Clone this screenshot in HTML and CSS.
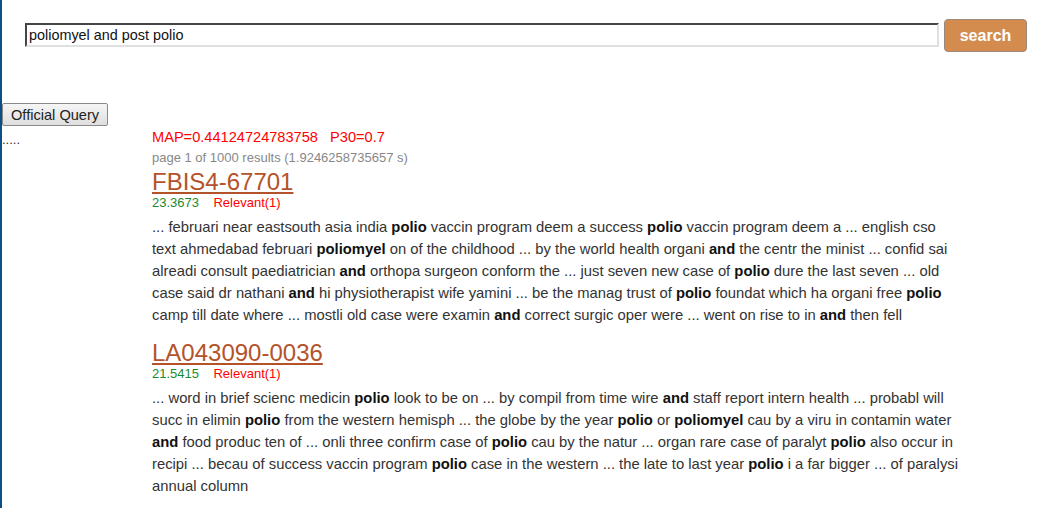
FILE: index.html
```html
<!DOCTYPE html>
<html>
<head>
<meta charset="utf-8">
<title>Search</title>
<link rel="stylesheet" href="styles.css">
</head>
<body>
<div class="page">
  <form class="search-bar">
    <input class="query" type="text" value="poliomyel and post polio">
    <button class="search-btn" type="button">search</button>
  </form>
  <button class="official" type="button">Official Query</button>
  <div class="main">
    <div class="side">.....</div>
    <div class="results">
      <div class="metrics">MAP=0.44124724783758&nbsp;&nbsp;&nbsp;P30=0.7</div>
      <div class="stats">page 1 of 1000 results (1.9246258735657 s)</div>

      <div class="result">
        <a class="title" href="#">FBIS4-67701</a>
        <div class="meta"><span class="score">23.3673</span>&nbsp;&nbsp;&nbsp;&nbsp;<span class="rel">Relevant(1)</span></div>
        <p class="snippet">... februari near eastsouth asia india <b>polio</b> vaccin program deem a success <b>polio</b> vaccin program deem a ... english cso text ahmedabad februari <b>poliomyel</b> on of the childhood ... by the world health organi <b>and</b> the centr the minist ... confid sai alreadi consult paediatrician <b>and</b> orthopa surgeon conform the ... just seven new case of <b>polio</b> dure the last seven ... old case said dr nathani <b>and</b> hi physiotherapist wife yamini ... be the manag trust of <b>polio</b> foundat which ha organi free <b>polio</b> camp till date where ... mostli old case were examin <b>and</b> correct surgic oper were ... went on rise to in <b>and</b> then fell</p>
      </div>

      <div class="result">
        <a class="title" href="#">LA043090-0036</a>
        <div class="meta"><span class="score">21.5415</span>&nbsp;&nbsp;&nbsp;&nbsp;<span class="rel">Relevant(1)</span></div>
        <p class="snippet">... word in brief scienc medicin <b>polio</b> look to be on ... by compil from time wire <b>and</b> staff report intern health ... probabl will succ in elimin <b>polio</b> from the western hemisph ... the globe by the year <b>polio</b> or <b>poliomyel</b> cau by a viru in contamin water <b>and</b> food produc ten of ... onli three confirm case of <b>polio</b> cau by the natur ... organ rare case of paralyt <b>polio</b> also occur in recipi ... becau of success vaccin program <b>polio</b> case in the western ... the late to last year <b>polio</b> i a far bigger ... of paralysi annual column</p>
      </div>
    </div>
  </div>
</div>
</body>
</html>
```
FILE: styles.css
```css
html, body {
  margin: 0;
  padding: 0;
  background: #fff;
}
body {
  font-family: "Liberation Sans", Arial, sans-serif;
  color: #333;
}
.page {
  border-left: 2px solid #0b4f86;
  min-height: 508px;
  box-sizing: border-box;
}
.search-bar {
  display: flex;
  align-items: flex-start;
  padding: 19px 0 0 23px;
  height: 84px;
  box-sizing: border-box;
  margin: 0;
}
.query {
  width: 914px;
  height: 24px;
  box-sizing: border-box;
  border: 2px inset #e0e0e0;
  border-top-color: #999;
  border-left-color: #999;
  padding: 0 2px;
  font-family: "Liberation Sans", Arial, sans-serif;
  font-size: 14.4px;
  color: #111;
  background: #fff;
  margin-top: 4px;
}
.search-btn {
  margin-left: 5px;
  width: 83px;
  height: 33px;
  background: #d38c4e;
  border: 1px solid #9a8a7c;
  border-radius: 4px;
  color: #fff;
  font-family: "Liberation Sans", Arial, sans-serif;
  font-weight: bold;
  font-size: 16px;
  padding: 0;
}
.official {
  display: block;
  margin: 19px 0 0 0;
  height: 23px;
  padding: 0 8px;
  font-family: "Liberation Sans", Arial, sans-serif;
  font-size: 14.6px;
  color: #222;
  background: linear-gradient(#f6f6f6, #dedede);
  border: 1px solid #8a8a8a;
  border-radius: 2px;
}
.main {
  display: flex;
}
.side {
  width: 150px;
  flex: none;
  font-size: 13px;
  line-height: 16px;
  color: #333;
  padding-top: 6px;
}
.results {
  width: 806px;
  padding-top: 0;
}
.metrics {
  color: #f00;
  font-size: 14.6px;
  line-height: 22px;
}
.stats {
  color: #888;
  font-size: 13px;
  line-height: 20px;
}
.result + .result {
  margin-top: 13px;
}
.title {
  display: inline-block;
  font-size: 24px;
  line-height: 27px;
  color: #b4532a;
  text-decoration: underline;
}
.meta {
  font-size: 13px;
  line-height: 16px;
}
.score {
  color: #1e8a2c;
}
.rel {
  color: #f00;
}
.snippet {
  margin: 5px 0 0 0;
  font-size: 14.8px;
  line-height: 22px;
  color: #333;
}
.snippet b {
  color: #111;
}
```
